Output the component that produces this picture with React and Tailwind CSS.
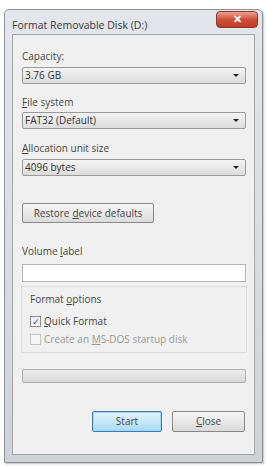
import React from "react";

function Select({ value }) {
  return (
    <div className="flex h-[17px] items-center justify-between rounded-[2px] border border-[#9a9a9a] bg-gradient-to-b from-[#f4f4f4] to-[#dcdcdc] pl-[2px] pr-[6px] text-[10px] text-[#333]">
      <span>{value}</span>
      <span className="h-0 w-0 border-l-[3px] border-r-[3px] border-t-[3px] border-l-transparent border-r-transparent border-t-[#222]" />
    </div>
  );
}

export default function App() {
  return (
    <div className="h-[467px] w-[267px] bg-white pl-[4px] pt-[9px] font-['Open_Sans',sans-serif]">
      <div className="flex h-[454px] w-[259px] flex-col rounded-t-[5px] border border-[#8e9398] bg-gradient-to-b from-[#e3e6ea] to-[#cfd3d8] shadow-[1px_1px_2px_rgba(0,0,0,0.25)]">
        {/* title bar */}
        <div className="flex h-[24px] items-start justify-between pl-[7px] pr-[4px]">
          <span className="mt-[8px] text-[10.5px] text-[#3a3a3a]">Format Removable Disk (D:)</span>
          <div className="mt-[1px] flex h-[17px] w-[42px] items-center justify-center rounded-[4px] border border-[#8c3a2e] bg-gradient-to-b from-[#e8a08f] via-[#d0503a] to-[#c23a24] text-[11px] font-bold text-white">
            ✕
          </div>
        </div>

        {/* client */}
        <div className="mx-[7px] mb-[7px] flex flex-1 flex-col border border-[#a3a7ab] bg-[#f0f0f0] pl-[9px] pr-[8px] pt-[14px] text-[10px] text-[#474747]">
          <div>Capacity:</div>
          <div className="mt-[3px]"><Select value="3.76 GB" /></div>

          <div className="mt-[11px]"><span className="underline">F</span>ile system</div>
          <div className="mt-[2px]"><Select value="FAT32 (Default)" /></div>

          <div className="mt-[12px]"><span className="underline">A</span>llocation unit size</div>
          <div className="mt-[3px]"><Select value="4096 bytes" /></div>

          <div className="mt-[27px]">
            <div className="inline-flex h-[20px] w-[132px] items-center justify-center rounded-[2px] border border-[#8a8a8a] bg-gradient-to-b from-[#f6f6f6] to-[#dadada] text-[10px]">
              Restore <span className="ml-[3px] underline">d</span>evice defaults
            </div>
          </div>

          <div className="mt-[21px]">Volume <span className="underline">l</span>abel</div>
          <div className="mt-[5px] h-[18px] border border-[#b5b5b5] bg-white" />

          <div className="mt-[4px] mr-[-1px] ml-[-1px] border border-[#dcdcdc] pb-[5px] pl-[8px] pt-[5px]">
            <div>Format <span className="underline">o</span>ptions</div>
            <div className="mt-[7px] flex items-center gap-[3px]">
              <span className="flex h-[11px] w-[11px] items-center justify-center border border-[#8f8f8f] bg-gradient-to-b from-[#e8e8f0] to-[#fafafa] text-[9px] leading-none text-[#3a3a8a]">✓</span>
              <span><span className="underline">Q</span>uick Format</span>
            </div>
            <div className="mt-[3px] flex items-center gap-[3px] text-[#9a9a9a]">
              <span className="h-[11px] w-[11px] border border-[#c4c4c4] bg-[#f6f6f6]" />
              <span>Create an <span className="underline">M</span>S-DOS startup disk</span>
            </div>
          </div>

          <div className="mt-[16px] h-[14px] rounded-[2px] border border-[#b0b0b0] bg-gradient-to-b from-[#ececec] to-[#d8d8d8]" />

          <div className="mt-[28px] flex justify-end gap-[10px] pr-[1px]">
            <div className="flex h-[21px] w-[70px] items-center justify-center rounded-[2px] border border-[#3c7fb1] bg-gradient-to-b from-[#e5f4fc] to-[#a9daf3] text-[10px] shadow-[inset_0_0_0_1px_#9fd6f5]">
              Start
            </div>
            <div className="flex h-[21px] w-[73px] items-center justify-center rounded-[2px] border border-[#8a8a8a] bg-gradient-to-b from-[#f6f6f6] to-[#dadada] text-[10px]">
              <span className="underline">C</span>lose
            </div>
          </div>
        </div>
      </div>
    </div>
  );
}
